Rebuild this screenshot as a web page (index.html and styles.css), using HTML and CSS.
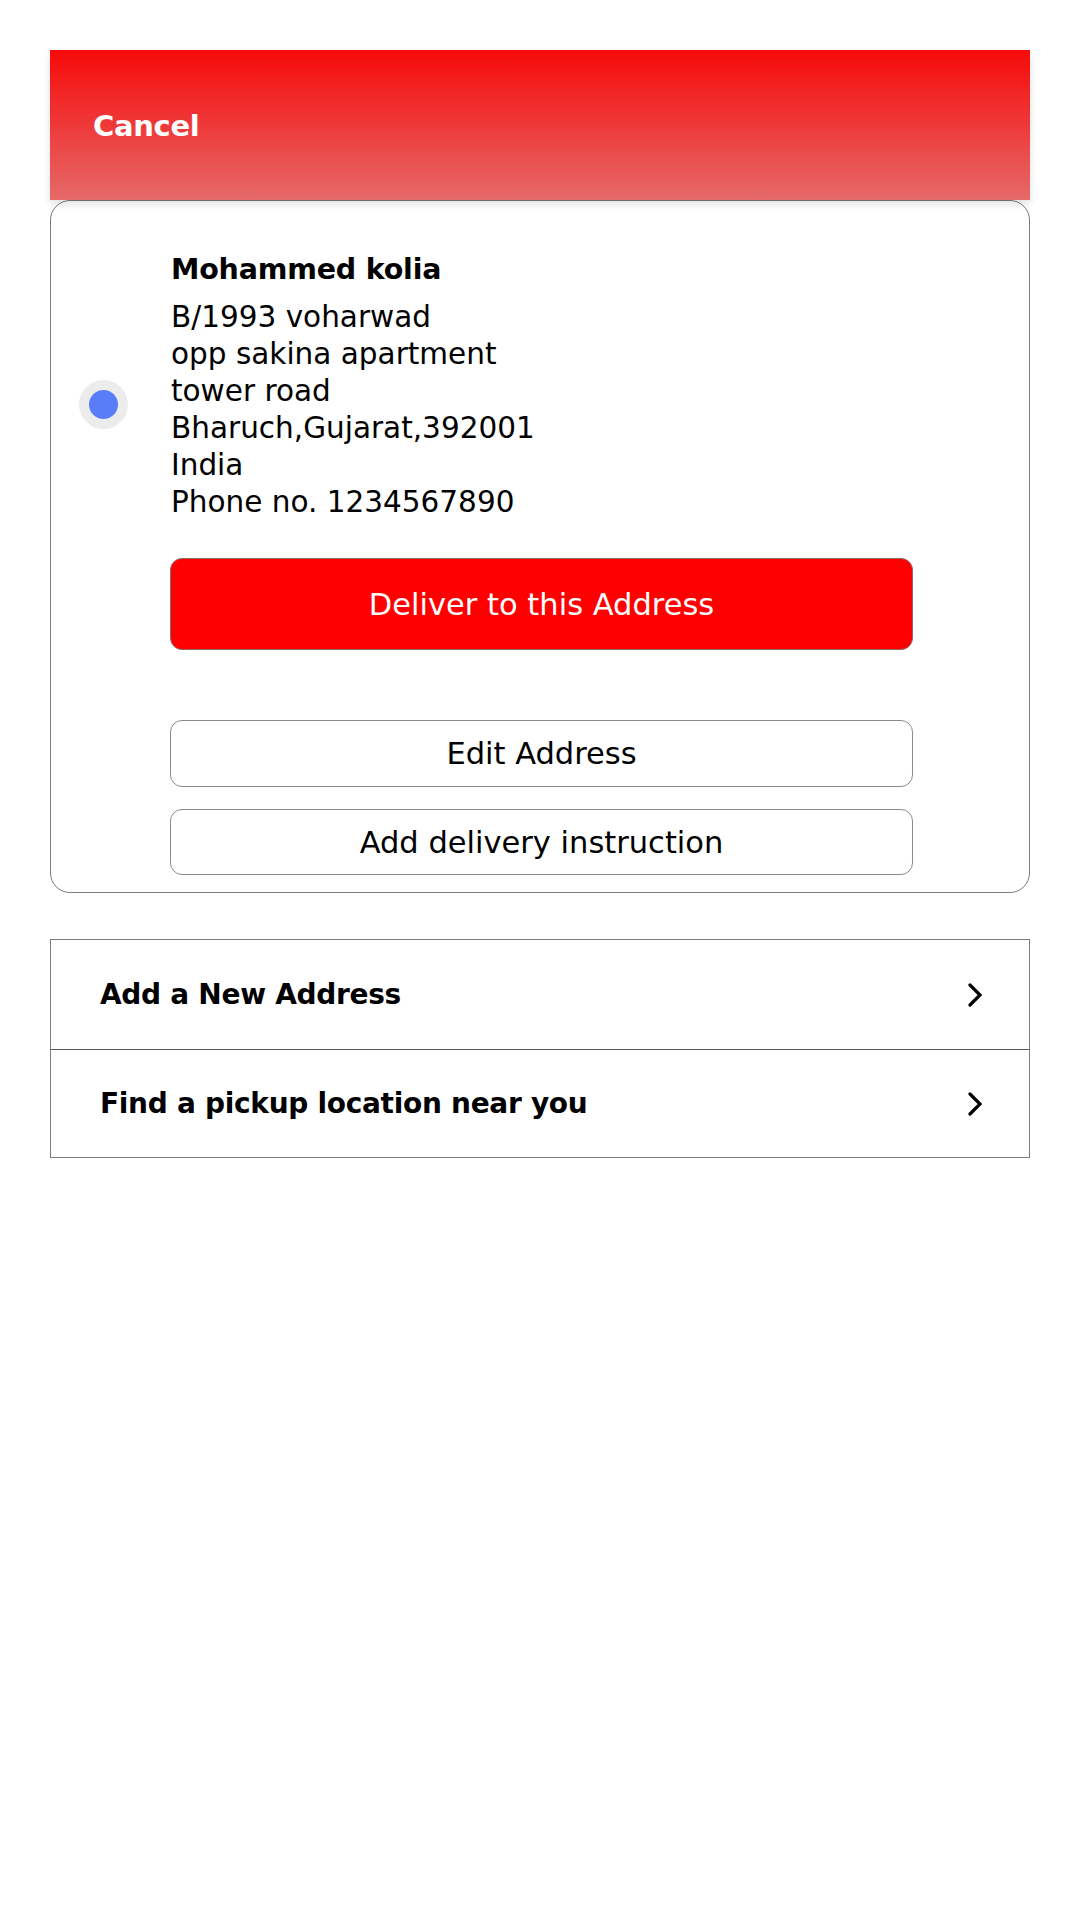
FILE: index.html
```html
<!DOCTYPE html>
<html lang="en">
<head>
<meta charset="utf-8">
<title>Select address</title>
<link rel="stylesheet" href="styles.css">
</head>
<body>
<div class="page">
  <header class="topbar">
    <span class="cancel">Cancel</span>
  </header>
  <section class="card">
    <div class="radio-col">
      <span class="radio"><span class="radio-dot"></span></span>
    </div>
    <div class="content">
      <div class="name">Mohammed kolia</div>
      <div class="addr">
        <div>B/1993 voharwad</div>
        <div>opp sakina apartment</div>
        <div>tower road</div>
        <div>Bharuch,Gujarat,392001</div>
        <div>India</div>
        <div>Phone no. 1234567890</div>
      </div>
      <button class="btn btn-primary">Deliver to this Address</button>
      <button class="btn btn-outline btn-edit">Edit Address</button>
      <button class="btn btn-outline btn-instr">Add delivery instruction</button>
    </div>
  </section>
  <nav class="list">
    <div class="row">
      <span>Add a New Address</span>
      <svg class="chev" width="16" height="24" viewBox="0 0 16 24"><path d="M3 2 L13 12 L3 22" fill="none" stroke="#000" stroke-width="3.2" stroke-linecap="round" stroke-linejoin="miter"/></svg>
    </div>
    <div class="row">
      <span>Find a pickup location near you</span>
      <svg class="chev" width="16" height="24" viewBox="0 0 16 24"><path d="M3 2 L13 12 L3 22" fill="none" stroke="#000" stroke-width="3.2" stroke-linecap="round" stroke-linejoin="miter"/></svg>
    </div>
  </nav>
</div>
</body>
</html>
```

FILE: styles.css
```css
* { box-sizing: border-box; }
html, body { margin: 0; padding: 0; background: #fff; }
body {
  font-family: "DejaVu Sans", "Noto Sans", sans-serif;
  color: #000;
}
.page {
  padding: 50px 50px 0 50px;
  width: 1080px;
}
.topbar {
  height: 150px;
  background: linear-gradient(to bottom, #f70a0a 0%, #ef3434 45%, #e66a6a 100%);
  display: flex;
  align-items: center;
  padding-left: 43px;
  padding-top: 2px;
  box-shadow: 0 4px 8px rgba(0,0,0,0.12);
  position: relative;
  z-index: 1;
}
.cancel {
  color: #fff;
  font-weight: bold;
  font-size: 29px;
  letter-spacing: -0.3px;
}
.card {
  border: 1px solid #7a7a7a;
  border-radius: 20px;
  display: grid;
  grid-template-columns: 119px 743px;
  padding-bottom: 17px;
}
.radio-col {
  padding-left: 28px;
  padding-top: 179px;
}
.radio {
  width: 49px;
  height: 49px;
  border-radius: 50%;
  background: #ececec;
  display: flex;
  align-items: center;
  justify-content: center;
}
.radio-dot {
  width: 29px;
  height: 29px;
  border-radius: 50%;
  background: #5b7cf8;
}
.content {
  padding-top: 51px;
  display: flex;
  flex-direction: column;
}
.name {
  font-weight: bold;
  font-size: 28.5px;
  line-height: 36px;
  letter-spacing: -0.2px;
  padding-left: 1px;
}
.addr {
  font-size: 29.5px;
  line-height: 37px;
  margin-top: 11px;
  padding-left: 1px;
}
.btn {
  font-family: inherit;
  width: 743px;
  border-radius: 12px;
  font-size: 30.5px;
  cursor: pointer;
  padding: 0;
}
.btn-primary {
  margin-top: 37px;
  height: 92px;
  background: #ff0000;
  color: #fff;
  border: 1px solid #8a6a6a;
}
.btn-outline {
  background: #fff;
  color: #000;
  border: 1px solid #8a8a8a;
}
.btn-edit {
  margin-top: 70px;
  height: 67px;
}
.btn-instr {
  margin-top: 22px;
  height: 66px;
}
.list {
  margin-top: 46px;
  border: 1px solid #7a7a7a;
}
.row {
  height: 109px;
  display: flex;
  align-items: center;
  justify-content: space-between;
  padding: 0 46px 0 49px;
  font-size: 28px;
  font-weight: bold;
  letter-spacing: -0.3px;
}
.row + .row {
  border-top: 1px solid #5a5a5a;
  height: 108px;
}
.chev { display: block; }
```
